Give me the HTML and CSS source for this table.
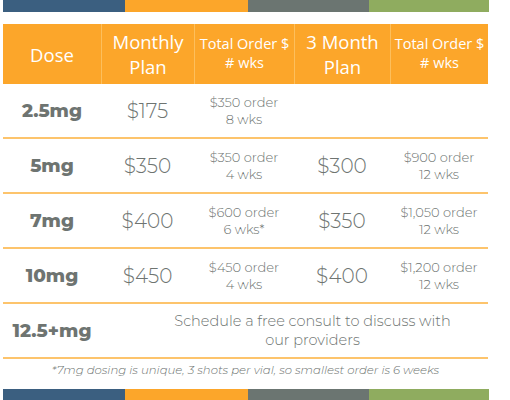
FILE: index.html
```html
<!DOCTYPE html>
<html>
<head>
<meta charset="utf-8">
<link rel="stylesheet" href="styles.css">
</head>
<body>
<div class="page">
  <div class="stripe">
    <span class="s blue"></span><span class="s orange"></span><span class="s gray"></span><span class="s green"></span>
  </div>
  <div class="table">
    <div class="head">
      <div class="hc big">Dose</div>
      <div class="hc big">Monthly<br>Plan</div>
      <div class="hc small">Total Order $<br># wks</div>
      <div class="hc big">3 Month<br>Plan</div>
      <div class="hc small">Total Order $<br># wks</div>
    </div>
    <div class="row">
      <div class="dose">2.5mg</div>
      <div class="price">$175</div>
      <div class="order">$350 order<br>8 wks</div>
      <div class="price"></div>
      <div class="order"></div>
    </div>
    <div class="row">
      <div class="dose">5mg</div>
      <div class="price">$350</div>
      <div class="order">$350 order<br>4 wks</div>
      <div class="price">$300</div>
      <div class="order">$900 order<br>12 wks</div>
    </div>
    <div class="row">
      <div class="dose">7mg</div>
      <div class="price">$400</div>
      <div class="order">$600 order<br>6 wks*</div>
      <div class="price">$350</div>
      <div class="order">$1,050 order<br>12 wks</div>
    </div>
    <div class="row">
      <div class="dose">10mg</div>
      <div class="price">$450</div>
      <div class="order">$450 order<br>4 wks</div>
      <div class="price">$400</div>
      <div class="order">$1,200 order<br>12 wks</div>
    </div>
    <div class="row last">
      <div class="dose">12.5+mg</div>
      <div class="consult">Schedule a free consult to discuss with<br>our providers</div>
    </div>
  </div>
  <div class="note">*7mg dosing is unique, 3 shots per vial, so smallest order is 6 weeks</div>
  <div class="stripe bottom">
    <span class="s blue"></span><span class="s orange"></span><span class="s gray"></span><span class="s green"></span>
  </div>
</div>
</body>
</html>
```
FILE: styles.css
```css
html, body {
  margin: 0;
  padding: 0;
  background: #ffffff;
}
.page {
  width: 486px;
  margin-left: 3px;
  font-family: "Montserrat", "Noto Sans", "DejaVu Sans", sans-serif;
  color: #6e7471;
}
.stripe {
  display: grid;
  grid-template-columns: 122px 123px 121px 120px;
  height: 12px;
}
.stripe.bottom {
  height: 13px;
  margin-top: 12px;
}
.s { display: block; }
.blue { background: #3b5f80; }
.orange { background: #fca62a; }
.gray { background: #6b7571; }
.green { background: #8fac5f; }

.table {
  margin-top: 12px;
  width: 485px;
}
.head, .row {
  display: grid;
  grid-template-columns: 98px 93px 100px 96px 98px;
}
.head {
  background: #fca62a;
  height: 60px;
  color: #ffffff;
  font-family: "Open Sans", "Noto Sans", sans-serif;
}
.hc {
  display: flex;
  align-items: center;
  justify-content: center;
  text-align: center;
  border-left: 1px solid #fdbf5c;
}
.hc:first-child { border-left: none; }
.hc.big {
  font-size: 18.5px;
  line-height: 25px;
}
.hc.small {
  font-size: 14.5px;
  line-height: 19px;
  padding-bottom: 2px;
}
.row {
  height: 53px;
  border-bottom: 2px solid #fdc46c;
  align-items: center;
  text-align: center;
}
.dose {
  font-weight: 800;
  font-size: 18.5px;
}
.price {
  font-weight: 300;
  font-size: 20px;
}
.order {
  font-weight: 300;
  font-size: 13px;
  line-height: 17px;
}
.consult {
  grid-column: 2 / 6;
  font-weight: 300;
  font-size: 14.5px;
  line-height: 19px;
  padding-left: 36px;
}
.note {
  text-align: center;
  font-style: italic;
  font-weight: 300;
  font-size: 11.7px;
  margin-top: 4px;
  line-height: 14px;
  width: 485px;
}
```
